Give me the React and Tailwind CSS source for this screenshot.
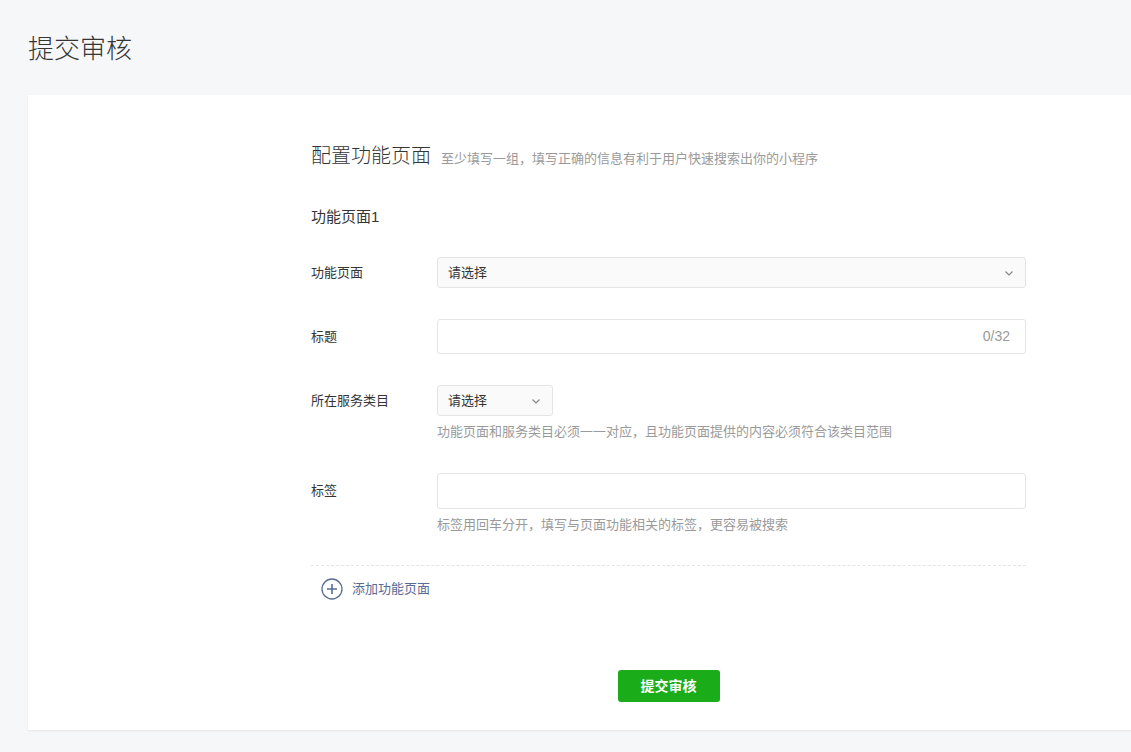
import React from "react";

const F = { fontFamily: '"Liberation Sans","Noto Sans CJK SC",sans-serif' };

function Chevron() {
  return (
    <svg width="12" height="12" viewBox="0 0 12 12" fill="none" stroke="#888" strokeWidth="1.2">
      <path d="M2.5 4.5 L6 8 L9.5 4.5" />
    </svg>
  );
}

export default function App() {
  return (
    <div style={F} className="min-h-[752px] bg-[#f6f7f9] overflow-hidden">
      <div className="pl-[28px] pt-[33px] h-[95px] text-[26px] leading-[32px] font-light text-[#353535]">提交审核</div>
      <div className="ml-[28px] w-[1110px] h-[635px] bg-white shadow-[0_1px_2px_rgba(0,0,0,0.08)]">
        <div className="ml-[283px] w-[715px] pt-[46px]">
          <div className="flex items-baseline h-[32px]">
            <span className="text-[20px] font-light text-[#353535]">配置功能页面</span>
            <span className="ml-[10px] text-[13px] text-[#9a9a9a]">至少填写一组，填写正确的信息有利于用户快速搜索出你的小程序</span>
          </div>
          <div className="mt-[33px] h-[22px] text-[15px] text-[#353535] leading-[22px]">功能页面1</div>

          <div className="mt-[29px] flex items-center h-[31px]">
            <div className="w-[126px] text-[13px] text-[#353535]">功能页面</div>
            <div className="flex-1 h-[31px] border border-[#e4e4e4] rounded-[3px] bg-[#fafafa] flex items-center justify-between px-[10px] text-[13px] text-[#353535]">
              <span>请选择</span><Chevron />
            </div>
          </div>

          <div className="mt-[31px] flex items-center h-[35px]">
            <div className="w-[126px] text-[13px] text-[#353535]">标题</div>
            <div className="flex-1 h-[35px] border border-[#e4e4e4] rounded-[3px] flex items-center justify-end px-[15px] text-[14px] text-[#9a9a9a]">0/32</div>
          </div>

          <div className="mt-[31px] flex items-center h-[31px]">
            <div className="w-[126px] text-[13px] text-[#353535]">所在服务类目</div>
            <div className="w-[116px] h-[31px] border border-[#e4e4e4] rounded-[3px] bg-[#fafafa] flex items-center justify-between px-[10px] text-[13px] text-[#353535]">
              <span>请选择</span><Chevron />
            </div>
          </div>
          <div className="ml-[126px] mt-[6px] text-[13px] text-[#9a9a9a] leading-[20px]">功能页面和服务类目必须一一对应，且功能页面提供的内容必须符合该类目范围</div>

          <div className="mt-[31px] flex items-center h-[36px]">
            <div className="w-[126px] text-[13px] text-[#353535]">标签</div>
            <div className="flex-1 h-[36px] border border-[#e4e4e4] rounded-[3px]"></div>
          </div>
          <div className="ml-[126px] mt-[6px] text-[13px] text-[#9a9a9a] leading-[20px]">标签用回车分开，填写与页面功能相关的标签，更容易被搜索</div>

          <div className="mt-[30px] border-t border-dashed border-[#e4e4e4]"></div>
          <div className="mt-[12px] flex items-center h-[22px] pl-[10px]">
            <svg width="22" height="22" viewBox="0 0 22 22" fill="none" stroke="#5a6d96" strokeWidth="1.3">
              <circle cx="11" cy="11" r="10" />
              <path d="M11 6 V16 M6 11 H16" strokeWidth="1.6" />
            </svg>
            <span className="ml-[9px] text-[13px] text-[#576b95]">添加功能页面</span>
          </div>

          <div className="mt-[70px] flex justify-center">
            <div className="w-[102px] h-[32px] bg-[#1aad19] rounded-[3px] flex items-center justify-center text-white text-[14px] font-bold">提交审核</div>
          </div>
        </div>
      </div>
    </div>
  );
}
